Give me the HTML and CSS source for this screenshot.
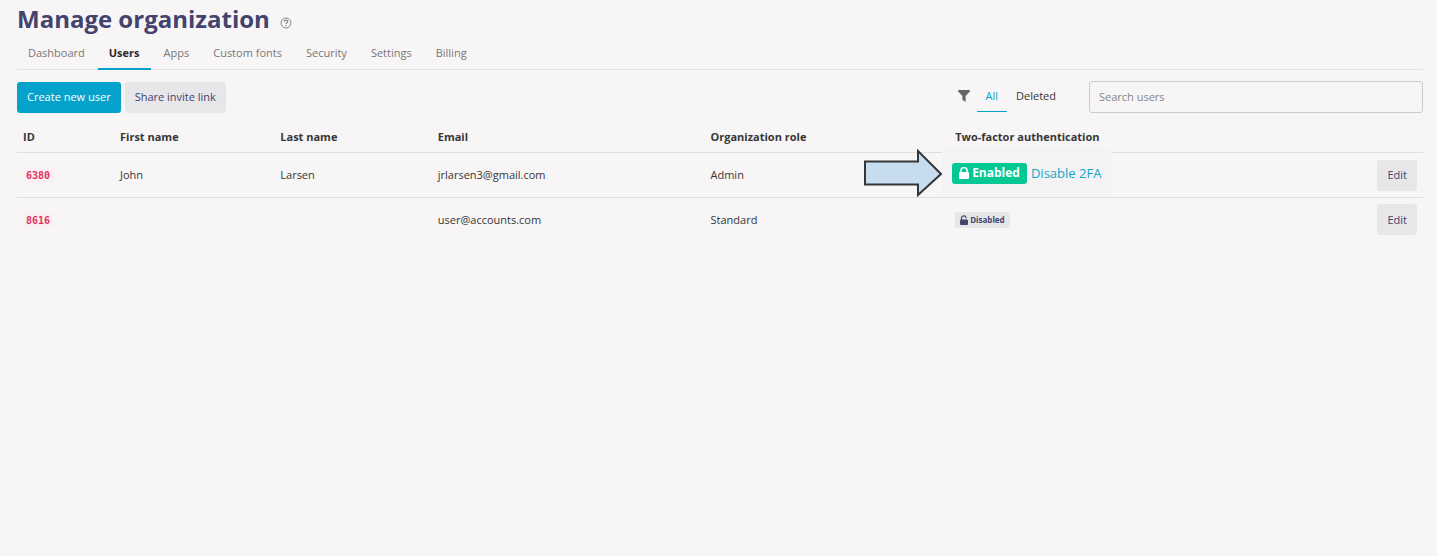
FILE: index.html
```html
<!DOCTYPE html>
<html lang="en">
<head>
<meta charset="utf-8">
<title>Manage organization</title>
<link rel="stylesheet" href="styles.css">
</head>
<body>
<main class="page">
  <header class="heading">
    <h1 class="title">Manage organization</h1>
    <button class="help" type="button" aria-label="Help">
      <svg class="help-icon" viewBox="0 0 12 12"><circle cx="6" cy="6" r="5" fill="none" stroke="currentColor"/><path d="M4.2 4.8C4.2 2.7 7.8 2.7 7.8 4.7C7.8 5.9 6 5.8 6 7.1M6 7.9V9.1" fill="none" stroke="currentColor" stroke-width="1.2"/></svg>
    </button>
  </header>
  <nav class="tabs">
    <a class="tab" href="#">Dashboard</a>
    <a class="tab tab-active" href="#">Users</a>
    <a class="tab" href="#">Apps</a>
    <a class="tab" href="#">Custom fonts</a>
    <a class="tab" href="#">Security</a>
    <a class="tab" href="#">Settings</a>
    <a class="tab" href="#">Billing</a>
  </nav>
  <section class="toolbar">
    <button class="button primary" type="button">Create new user</button>
    <button class="button" type="button">Share invite link</button>
    <div class="filters">
      <svg class="filter-icon" viewBox="0 0 12 12"><path d="M0 0H12V1.2L7.6 6V12L4.4 9.8V6L0 1.2Z" fill="currentColor"/></svg>
      <a class="filter filter-active" href="#">All</a>
      <a class="filter" href="#">Deleted</a>
    </div>
    <input class="search" type="search" placeholder="Search users" aria-label="Search users">
  </section>
  <table class="users">
    <colgroup><col class="col-id"><col class="col-first"><col class="col-last"><col class="col-email"><col class="col-role"><col><col class="col-edit"></colgroup>
    <thead>
      <tr><th>ID</th><th>First name</th><th>Last name</th><th>Email</th><th>Organization role</th><th>Two-factor authentication</th><th></th></tr>
    </thead>
    <tbody>
      <tr>
        <td><code class="id">6380</code></td><td>John</td><td>Larsen</td><td>jrlarsen3@gmail.com</td><td>Admin</td>
        <td class="auth">
          <div class="callout">
            <svg class="arrow" viewBox="0 0 78 48"><path d="M1 12.5H54V2L77 25L54 46V35.500H1Z" fill="#c8dcf0" stroke="#333638" stroke-width="2"/></svg>
            <span class="badge enabled"><svg class="lock" viewBox="0 0 10 12"><path d="M2 6V3.500A3 3 0 0 1 8 3.500V6" fill="none" stroke="currentColor" stroke-width="1.500"/><rect y="5" width="10" height="7" rx="1" fill="currentColor"/></svg>Enabled</span>
            <a class="disable" href="#">Disable 2FA</a>
          </div>
        </td>
        <td class="action"><button class="button" type="button">Edit</button></td>
      </tr>
      <tr>
        <td><code class="id">8616</code></td><td></td><td></td><td>user@accounts.com</td><td>Standard</td>
        <td><span class="badge disabled"><svg class="lock" viewBox="0 0 8 10"><path d="M1.500 5V3A2.300 2.300 0 0 1 6 2.500V3.300" fill="none" stroke="currentColor" stroke-width="1.200"/><rect y="4.500" width="8" height="5.500" rx="1" fill="currentColor"/></svg>Disabled</span></td>
        <td class="action"><button class="button" type="button">Edit</button></td>
      </tr>
    </tbody>
  </table>
</main>
</body>
</html>
```
FILE: styles.css
```css
* { box-sizing: border-box; }
body {
  margin: 0;
  background: #f7f5f6;
  color: #363636;
  font: 11px/16px "Open Sans", sans-serif;
}
a { text-decoration: none; }
.page { padding: 3px 14px 0 17px; }
.heading { display: flex; align-items: center; gap: 10px; }
.title { margin: 0; color: #43436d; font-size: 24px; line-height: 32px; font-weight: 700; }
.help { display: flex; margin-top: 8px; padding: 0; border: 0; background: none; color: #888; }
.help-icon { width: 12px; height: 12px; }
.tabs { display: flex; gap: 2px; border-bottom: 1px solid #e2e1e2; }
.tab { margin-bottom: -1px; padding: 10px 11px 7px; border-bottom: 2px solid transparent; color: #777; }
.tab-active { border-color: #08a3cb; color: #292929; font-weight: 700; }
.toolbar { display: flex; align-items: center; gap: 4px; padding-top: 11px; }
.button {
  height: 31px;
  padding: 0 10px;
  border: 0;
  border-radius: 3px;
  background: #e7e6e9;
  color: #43436d;
  font: inherit;
}
.primary { background: #05a2cb; color: #fff; }
.filters { display: flex; align-items: center; margin-left: auto; margin-right: 20px; }
.filter-icon { width: 12px; height: 12px; margin: 0 7px 2px 0; color: #666; }
.filter { padding: 6px 9px 7px; border-bottom: 1px solid transparent; color: #363636; }
.filter-active { border-color: #08a3cb; color: #08a3cb; }
.search {
  width: 334px;
  height: 32px;
  padding: 0 9px 2px;
  border: 1px solid #ccc;
  border-radius: 3px;
  background: transparent;
  color: #363636;
  font: inherit;
}
.search::placeholder { color: #858585; opacity: 1; }
.users { width: 100%; margin-top: 9px; border-collapse: separate; border-spacing: 0; table-layout: fixed; }
.col-id { width: 6.9%; }
.col-first { width: 11.4%; }
.col-last { width: 11.2%; }
.col-email { width: 19.4%; }
.col-role { width: 17.4%; }
.col-edit { width: 6%; }
.users th, .users td { padding: 0 6px; text-align: left; }
.users th { height: 31px; border-bottom: 1px solid #dedddf; font-weight: 700; }
.users td { height: 43px; }
.users tbody tr:first-child td { height: 45px; border-bottom: 1px solid #dedddf; }
.users .action { text-align: right; }
.id {
  padding: 2px 3px;
  border-radius: 2px;
  background: #faeff2;
  color: #e0335c;
  font: 700 10px/12px "DejaVu Sans Mono", monospace;
}
.users .auth { position: relative; }
.callout {
  position: absolute;
  inset: -4px auto 0 -7px;
  display: flex;
  align-items: center;
  gap: 4px;
  padding: 0 10px;
  background: #f3f3f3;
}
.arrow { position: absolute; right: 100%; top: 0; width: 78px; height: 48px; }
.badge { display: inline-flex; align-items: center; vertical-align: middle; border-radius: 3px; font-weight: 700; }
.enabled { gap: 3px; height: 21px; padding: 0 7px; background: #04c894; color: #fff; font-size: 12px; }
.enabled .lock { width: 10px; height: 12px; }
.disabled { gap: 2px; height: 16px; padding: 0 5px; background: #e7e6e9; color: #43436d; font-size: 8px; }
.disabled .lock { width: 8px; height: 10px; }
.disable { color: #16a5cd; font-size: 13px; white-space: nowrap; }
```
